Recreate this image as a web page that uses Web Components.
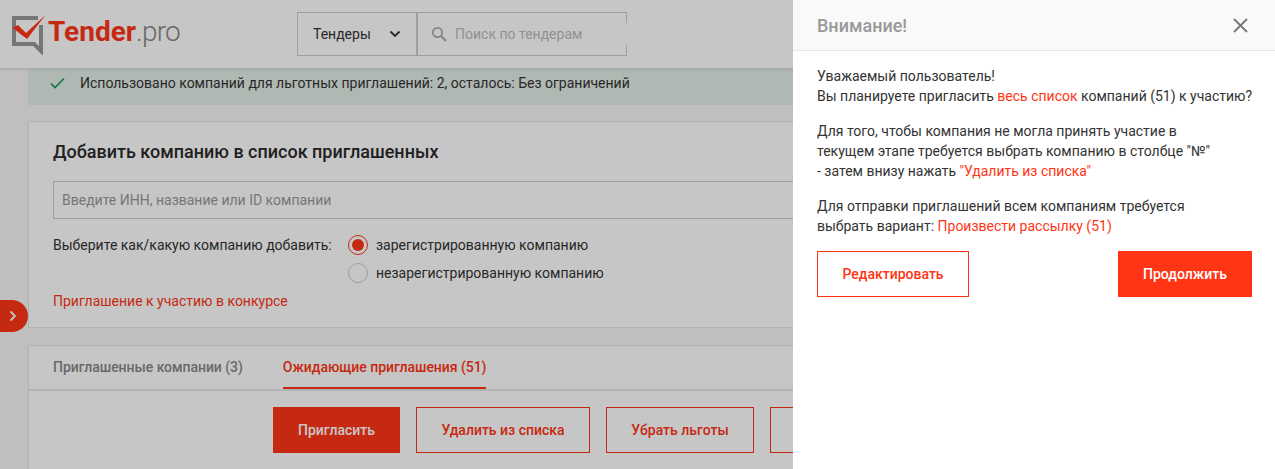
<!DOCTYPE html>
<html>
<head>
<meta charset="utf-8">
<style>
  html, body { margin: 0; height: 100%; overflow: hidden; }
  body { font-family: Roboto, "Liberation Sans", sans-serif; font-size: 14px; color: #333; background: #f6f6f6; }
</style>
</head>
<body>
<app-page></app-page>
<script>
const RED = "#ff3516";

class SiteHeader extends HTMLElement {
  connectedCallback() {
    this.attachShadow({ mode: "open" }).innerHTML = `
      <style>
        :host { display: flex; align-items: flex-start; height: 68px; background: #fff; box-shadow: 0 1px 3px rgba(0,0,0,.15); position: relative; z-index: 1; box-sizing: border-box; padding-left: 12px; }
        #logo { display: flex; align-items: flex-start; width: 285px; padding-top: 15px; }
        #word { font-size: 28px; line-height: 36px; font-weight: 700; color: ${RED}; letter-spacing: 0; margin: -1px 0 0 0; }
        #word span { font-weight: 300; color: #888; letter-spacing: -.8px; }
        #select { box-sizing: border-box; width: 120px; height: 44px; margin-top: 12px; border: 1px solid #ccc; display: flex; align-items: center; justify-content: space-between; padding: 0 15px; color: #333; }
        #search { box-sizing: border-box; width: 210px; height: 44px; margin-top: 12px; border: 1px solid #ccc; border-right: 0; display: flex; align-items: center; gap: 8px; padding-left: 13px; color: #bbb; position: relative; }
        #search::after { content: ""; position: absolute; right: 0; top: 0; width: 1px; height: 10px; background: #ccc; }
        #search::before { content: ""; position: absolute; right: 0; bottom: 0; width: 1px; height: 10px; background: #ccc; }
      </style>
      <div id="logo">
        <svg width="36" height="40" viewBox="0 0 36 40">
          <path d="M26 3H2V29H22L29 36V10" fill="none" stroke="#999" stroke-width="4"/>
          <path d="M.7 13L6 10l8 8L33.5 0 15 24z" fill="${RED}"/>
        </svg>
        <div id="word">Tender<span>.pro</span></div>
      </div>
      <div id="select">Тендеры
        <svg width="12" height="8" viewBox="0 0 12 8"><path d="M1.5 1.5L6 6l4.5-4.5" fill="none" stroke="#333" stroke-width="1.8"/></svg>
      </div>
      <div id="search">
        <svg width="16" height="16" viewBox="0 0 16 16"><circle cx="6.5" cy="6.5" r="4.7" fill="none" stroke="#aaa" stroke-width="1.7"/><path d="M10 10l5 5" stroke="#aaa" stroke-width="2"/></svg>
        Поиск по тендерам
      </div>`;
  }
}

class AlertBar extends HTMLElement {
  connectedCallback() {
    this.attachShadow({ mode: "open" }).innerHTML = `
      <style>
        :host { display: flex; align-items: center; box-sizing: border-box; height: 36px; margin: 1px 0 16px 28px; background: #e3ede7; padding: 0 0 8px 22px; gap: 15px; color: #333; }
      </style>
      <svg width="15" height="12" viewBox="0 0 15 12"><path d="M1 6.5l4 4L14 1.5" fill="none" stroke="#1c9a52" stroke-width="1.6"/></svg>
      <slot></slot>`;
  }
}

class AddCompany extends HTMLElement {
  connectedCallback() {
    this.attachShadow({ mode: "open" }).innerHTML = `
      <style>
        :host { display: block; box-sizing: border-box; height: 207px; margin: 0 0 17px 28px; background: #fff; border: 1px solid #e4e4e4; padding: 18px 0 0 24px; }
        h2 { margin: 0 0 17px; font-size: 18px; line-height: 24px; font-weight: 500; color: #2a2a2a; }
        #input { box-sizing: border-box; height: 38px; border: 1px solid #ccc; border-right: 0; display: flex; align-items: center; padding: 0 0 0 8px; color: #999; margin-bottom: 13px; }
        #choose { display: flex; }
        #label { width: 295px; line-height: 26px; }
        radio-opt { margin-bottom: 3px; }
        a { display: block; margin-top: 3px; color: ${RED}; line-height: 20px; }
      </style>
      <h2>Добавить компанию в список приглашенных</h2>
      <div id="input">Введите ИНН, название или ID компании</div>
      <div id="choose">
        <div id="label">Выберите как/какую компанию добавить:</div>
        <div>
          <radio-opt checked>зарегистрированную компанию</radio-opt>
          <radio-opt>незарегистрированную компанию</radio-opt>
        </div>
      </div>
      <a>Приглашение к участию в конкурсе</a>`;
  }
}

class RadioOpt extends HTMLElement {
  connectedCallback() {
    const on = this.hasAttribute("checked");
    this.attachShadow({ mode: "open" }).innerHTML = `
      <style>
        :host { display: flex; align-items: center; gap: 8px; height: 25px; }
        i { box-sizing: border-box; width: 20px; height: 20px; border-radius: 50%; border: 1px solid ${on ? RED : "#ccc"}; display: flex; align-items: center; justify-content: center; }
        b { width: 12px; height: 12px; border-radius: 50%; background: ${RED}; }
      </style>
      <i>${on ? "<b></b>" : ""}</i><slot></slot>`;
  }
}

class InviteTabs extends HTMLElement {
  connectedCallback() {
    this.attachShadow({ mode: "open" }).innerHTML = `
      <style>
        :host { display: block; margin-left: 28px; height: 130px; background: #fff; border: 1px solid #e4e4e4; border-bottom: 0; box-sizing: border-box; }
        #tabs { display: flex; gap: 40px; height: 43px; padding-left: 24px; border-bottom: 2px solid #e4e4e4; font-weight: 500; color: #888; letter-spacing: -.04px; }
        #tabs div { box-sizing: border-box; height: 43px; line-height: 43px; }
        #tabs .on { color: ${RED}; border-bottom: 2px solid ${RED}; }
        #acts { display: flex; gap: 16px; padding: 16px 0 0 244px; overflow: hidden; }
      </style>
      <div id="tabs"><div>Приглашенные компании (3)</div><div class="on">Ожидающие приглашения (51)</div></div>
      <div id="acts">
        <red-btn solid w="127">Пригласить</red-btn>
        <red-btn w="174">Удалить из списка</red-btn>
        <red-btn w="148">Убрать льготы</red-btn>
        <red-btn w="148"></red-btn>
      </div>`;
  }
}

class RedBtn extends HTMLElement {
  connectedCallback() {
    const solid = this.hasAttribute("solid");
    this.attachShadow({ mode: "open" }).innerHTML = `
      <style>
        :host { display: flex; flex: none; box-sizing: border-box; height: 46px; width: ${this.getAttribute("w")}px; align-items: center; justify-content: center; font-weight: 500; border: 1px solid ${RED}; background: ${solid ? RED : "#fff"}; color: ${solid ? "#fff" : RED}; }
      </style><slot></slot>`;
  }
}

class SideDrawer extends HTMLElement {
  connectedCallback() {
    this.attachShadow({ mode: "open" }).innerHTML = `
      <style>
        :host { position: absolute; top: 0; right: 0; bottom: 0; width: 482px; background: #fff; color: #333; z-index: 3; }
        header { box-sizing: border-box; height: 51px; background: #f9f9f9; border-bottom: 1px solid #e6e6e6; display: flex; align-items: center; justify-content: space-between; padding: 0 27px 0 24px; }
        h3 { margin: 0; font-size: 18px; font-weight: 500; color: #999; }
        #body { padding: 15px 23px 0 24px; line-height: 20px; }
        p { margin: 0 0 15px; white-space: nowrap; }
        em { font-style: normal; color: ${RED}; }
        #btns { display: flex; justify-content: space-between; margin-top: 15px; }
      </style>
      <header><h3>Внимание!</h3>
        <svg width="15" height="15" viewBox="0 0 15 15"><path d="M1 1l13 13M14 1L1 14" stroke="#777" stroke-width="1.8"/></svg>
      </header>
      <div id="body">
        <p>Уважаемый пользователь!<br>Вы планируете пригласить <em>весь список</em> компаний (51) к участию?</p>
        <p>Для того, чтобы компания не могла принять участие в<br>текущем этапе требуется выбрать компанию в столбце "№"<br>- затем внизу нажать <em>"Удалить из списка"</em></p>
        <p>Для отправки приглашений всем компаниям требуется<br>выбрать вариант: <em>Произвести рассылку (51)</em></p>
        <div id="btns"><red-btn w="152">Редактировать</red-btn><red-btn solid w="134">Продолжить</red-btn></div>
      </div>`;
  }
}

class AppPage extends HTMLElement {
  connectedCallback() {
    this.attachShadow({ mode: "open" }).innerHTML = `
      <style>
        :host { display: block; position: relative; width: 1275px; height: 469px; overflow: hidden; }
        #veil { position: absolute; inset: 0; background: rgba(0,0,0,.224); z-index: 2; }
        #toggle { position: absolute; left: 0; top: 300px; width: 28px; height: 32px; background: ${RED}; border-radius: 0 16px 16px 0; z-index: 1; display: flex; align-items: center; justify-content: center; padding-right: 3px; box-sizing: border-box; }
      </style>
      <site-header></site-header>
      <alert-bar>Использовано компаний для льготных приглашений: 2, осталось: Без ограничений</alert-bar>
      <add-company></add-company>
      <invite-tabs></invite-tabs>
      <div id="toggle"><svg width="8" height="12" viewBox="0 0 8 12"><path d="M1.5 1.5L6 6l-4.5 4.5" fill="none" stroke="#fff" stroke-width="1.8"/></svg></div>
      <div id="veil"></div>
      <side-drawer></side-drawer>`;
  }
}

customElements.define("site-header", SiteHeader);
customElements.define("alert-bar", AlertBar);
customElements.define("radio-opt", RadioOpt);
customElements.define("red-btn", RedBtn);
customElements.define("add-company", AddCompany);
customElements.define("invite-tabs", InviteTabs);
customElements.define("side-drawer", SideDrawer);
customElements.define("app-page", AppPage);
</script>
</body>
</html>
